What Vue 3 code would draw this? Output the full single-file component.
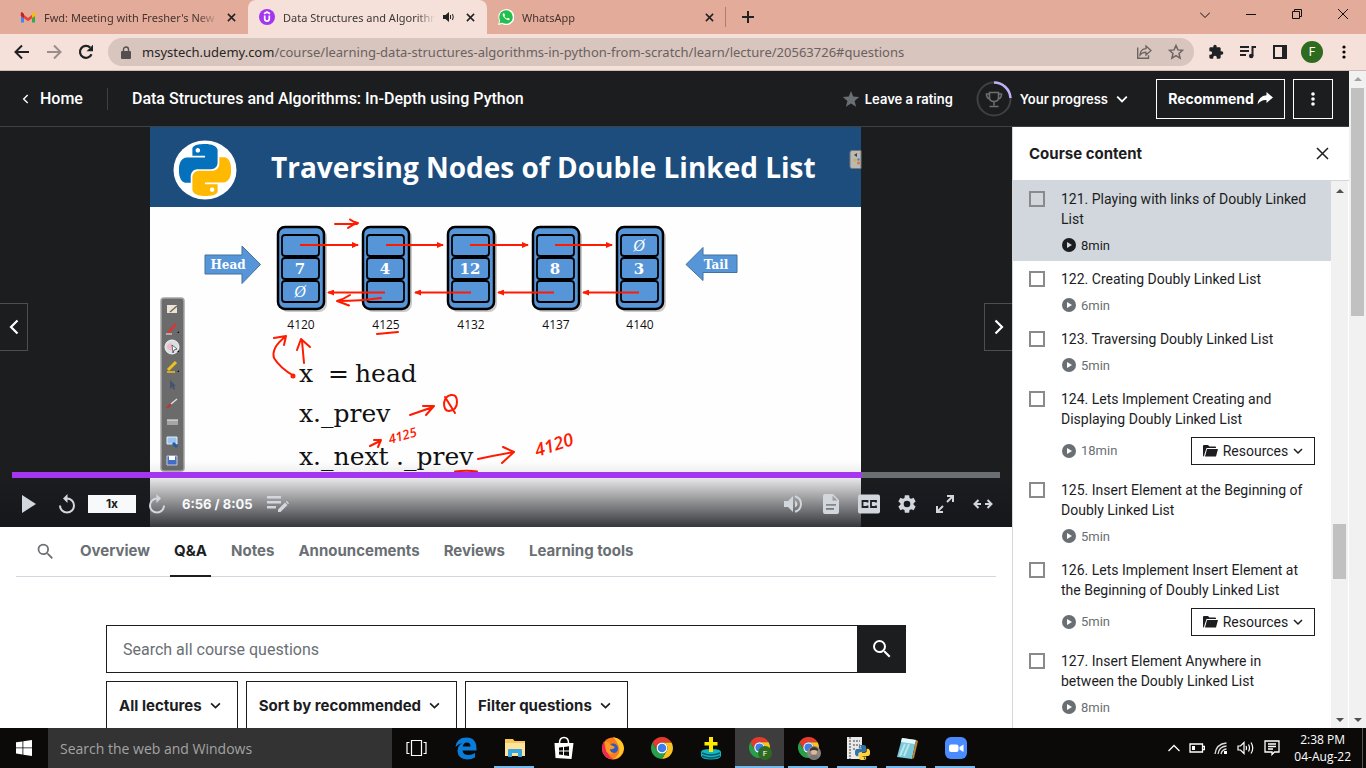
<script setup>
import { ref } from 'vue'

const query = ref('')
const taskQuery = ref('')

const windowButtons = [
  { name: 'Tab search', d: 'M0 3.500l5 5 5-5' },
  { name: 'Minimize', d: 'M0 5.500h10' },
  { name: 'Restore', d: 'M.5 2.500h7v7h-7zM2.500 2.500v-2h7v7h-2' },
  { name: 'Close', d: 'M0 0l10 10M10 0L0 10' }
]

const tabs = ['Overview', 'Q&A', 'Notes', 'Announcements', 'Reviews', 'Learning tools']
const filters = ['All lectures', 'Sort by recommended', 'Filter questions']

const lectures = [
  { id: 121, title: '121. Playing with links of Doubly Linked\nList', time: '8min', current: true },
  { id: 122, title: '122. Creating Doubly Linked List', time: '6min' },
  { id: 123, title: '123. Traversing Doubly Linked List', time: '5min' },
  { id: 124, title: '124. Lets Implement Creating and\nDisplaying Doubly Linked List', time: '18min', resources: true },
  { id: 125, title: '125. Insert Element at the Beginning of\nDoubly Linked List', time: '5min' },
  { id: 126, title: '126. Lets Implement Insert Element at\nthe Beginning of Doubly Linked List', time: '5min', resources: true },
  { id: 127, title: '127. Insert Element Anywhere in\nbetween the Doubly Linked List', time: '8min' }
]

const nodes = [
  { x: 277, top: '', value: '7', bottom: 'Ø', address: '4120' },
  { x: 362, top: '', value: '4', bottom: '', address: '4125' },
  { x: 447, top: '', value: '12', bottom: '', address: '4132' },
  { x: 532, top: '', value: '8', bottom: '', address: '4137' },
  { x: 616, top: 'Ø', value: '3', bottom: '', address: '4140' }
]
const nextLinks = [[300, 358], [386, 443], [470, 528], [555, 612]]
const prevLinks = [[385, 328], [471, 415], [554, 498], [639, 583]]

const apps = [
  { name: 'Task View', icon: 'taskview' },
  { name: 'Edge', icon: 'edge' },
  { name: 'File Explorer', icon: 'folder', open: true },
  { name: 'Store', icon: 'store' },
  { name: 'Firefox', icon: 'firefox' },
  { name: 'Chrome', icon: 'chrome' },
  { name: 'Disk tool', icon: 'disk' },
  { name: 'Chrome F', icon: 'chrome-f', open: true, active: true },
  { name: 'Chrome profile', icon: 'chrome-p', open: true },
  { name: 'Python', icon: 'pyfile', open: true },
  { name: 'Notepad', icon: 'notepad', open: true },
  { name: 'Zoom', icon: 'zoom', open: true }
]
</script>

<template>
  <svg class="defs" width="0" height="0" aria-hidden="true">
    <symbol id="i-x" viewBox="0 0 10 10"><path d="M1 1l8 8M9 1L1 9" stroke="currentColor" stroke-width="1.700" fill="none" /></symbol>
    <symbol id="i-x-thin" viewBox="0 0 13 13"><path d="M1 1l11 11M12 1L1 12" stroke="currentColor" stroke-width="1.500" fill="none" /></symbol>
    <symbol id="i-down" viewBox="0 0 10 10"><path d="M1 3l4 4 4-4" stroke="currentColor" stroke-width="1.500" fill="none" /></symbol>
    <symbol id="i-left" viewBox="0 0 10 16"><path d="M8.500 1.500L2 8l6.500 6.500" stroke="currentColor" stroke-width="2.200" fill="none" /></symbol>
    <symbol id="i-search" viewBox="0 0 24 24"><path d="M15.500 14h-.79l-.28-.27A6.470 6.470 0 0 0 16 9.500 6.500 6.500 0 1 0 9.500 16c1.610 0 3.090-.59 4.230-1.570l.27.28v.79l5 4.990L20.490 19l-4.990-5zm-6 0a4.500 4.500 0 1 1 0-9 4.500 4.500 0 0 1 0 9z" fill="currentColor" /></symbol>
    <symbol id="i-python-half" viewBox="0 0 24 24"><path fill="currentColor" d="M14.250.18l.9.2.73.26.59.3.45.32.34.34.25.34.16.33.1.3.04.26.02.2-.01.13V8.500l-.05.63-.13.55-.21.46-.26.38-.3.31-.33.25-.35.19-.35.14-.33.1-.3.07-.26.04-.21.02H8.770l-.69.05-.59.14-.5.22-.41.27-.33.32-.27.35-.2.36-.15.37-.1.35-.07.32-.04.27-.02.21v3.060H3.170l-.21-.03-.28-.07-.32-.12-.35-.18-.36-.26-.36-.36-.35-.46-.32-.59-.28-.73-.21-.88-.14-1.050-.05-1.230.06-1.220.16-1.040.24-.87.32-.71.36-.57.4-.44.42-.33.42-.24.4-.16.36-.1.32-.05.24-.01h.16l.06.01h8.160v-.83H6.180l-.01-2.750-.02-.37.05-.34.11-.31.17-.28.25-.26.31-.23.38-.2.44-.18.51-.15.58-.12.64-.1.71-.06.77-.04.84-.02 1.270.05zm-6.300 1.980l-.23.33-.08.41.08.41.23.34.33.22.41.09.41-.09.33-.22.23-.34.08-.41-.08-.41-.23-.33-.33-.22-.41-.09-.41.09z" /></symbol>
    <symbol id="i-chrome" viewBox="0 0 48 48">
      <path d="M4.950 13A22 22 0 0 1 43.050 13H24A11 11 0 0 0 14.470 29.500Z" fill="#e33b2e" />
      <path d="M4.950 13A22 22 0 0 1 43.050 13H24A11 11 0 0 0 14.470 29.500Z" fill="#fcc31e" transform="rotate(120 24 24)" />
      <path d="M4.950 13A22 22 0 0 1 43.050 13H24A11 11 0 0 0 14.470 29.500Z" fill="#27a148" transform="rotate(240 24 24)" />
      <circle cx="24" cy="24" r="11" fill="#fff" /><circle cx="24" cy="24" r="8.500" fill="#3f7de8" />
    </symbol>
  </svg>

  <div class="screen">
    <header class="tabstrip">
      <div class="tab">
        <svg width="16" height="16" viewBox="0 0 16 16">
          <path d="M1 4v9.500h3V6z" fill="#4285f4" /><path d="M15 4v9.500h-3V6z" fill="#34a853" />
          <path d="M1 3.500L8 9l7-5.500V7l-7 5.200L1 7z" fill="#ea4335" />
          <path d="M12 5l2-2q1.200 0 1.200 1.500V7L12 9z" fill="#fbbc04" /><path d="M4 5L2 3Q.8 3 .8 4.500V7L4 9z" fill="#c5221f" />
        </svg>
        <span class="tab-title">Fwd: Meeting with Fresher's New</span>
        <button class="tab-close" aria-label="Close tab"><svg width="9" height="9"><use href="#i-x" /></svg></button>
      </div>
      <div class="tab current">
        <svg width="16" height="16" viewBox="0 0 16 16">
          <circle cx="8" cy="8" r="8" fill="#a435f0" />
          <path d="M5 4.800L8 3l3 1.800M5.700 6.500v3.300q0 2.300 2.300 2.300t2.300-2.300V6.500" fill="none" stroke="#fff" stroke-width="1.700" />
        </svg>
        <span class="tab-title">Data Structures and Algorithm</span>
        <svg class="speaker" width="12" height="10" viewBox="0 0 12 10"><path d="M0 3h2.500L6 0v10L2.500 7H0z" fill="#222" /><path d="M7.500 3v4M9.500 2q1.500 3 0 6" stroke="#222" fill="none" /></svg>
        <button class="tab-close" aria-label="Close tab"><svg width="9" height="9"><use href="#i-x" /></svg></button>
      </div>
      <div class="tab">
        <svg width="16" height="16" viewBox="0 0 16 16">
          <path d="M0 16l1.200-4.300A8 8 0 1 1 4.300 15z" fill="#fff" /><circle cx="8" cy="8" r="6.800" fill="#1fc04b" /><path d="M1.400 14.600l1-3.600 2.600 2.600z" fill="#1fc04b" />
          <path d="M5.300 4.300q-1.500 1.500.5 4t4.300 3q1.500 0 1.700-1.600L10 8.800l-.9 1Q7.200 9 6.400 7.200l.7-.9-.8-1.900z" fill="#fff" />
        </svg>
        <span class="tab-title">WhatsApp</span>
        <button class="tab-close" aria-label="Close tab"><svg width="9" height="9"><use href="#i-x" /></svg></button>
      </div>
      <button class="new-tab" aria-label="New tab"><svg width="12" height="12" viewBox="0 0 12 12"><path d="M6 0v12M0 6h12" stroke="#222" stroke-width="2" /></svg></button>
      <div class="window-buttons">
        <button v-for="b in windowButtons" :key="b.name" :aria-label="b.name">
          <svg width="10" height="10" viewBox="0 0 10 10"><path :d="b.d" fill="none" stroke="#111" /></svg>
        </button>
      </div>
    </header>

    <nav class="toolbar">
      <div class="nav-buttons">
        <button aria-label="Back"><svg width="16" height="16" viewBox="0 0 16 16"><path d="M15 8H2M8 1.500L1.500 8 8 14.500" fill="none" stroke="#202124" stroke-width="2" /></svg></button>
        <button aria-label="Forward"><svg width="16" height="16" viewBox="0 0 16 16"><path d="M1 8h13M8 1.500L14.500 8 8 14.500" fill="none" stroke="#9b8d89" stroke-width="2" /></svg></button>
        <button aria-label="Reload"><svg width="16" height="16" viewBox="0 0 16 16"><path d="M13.500 10.200A6 6 0 1 1 12.200 3.600" fill="none" stroke="#202124" stroke-width="2.200" /><path d="M15 .8v6.400H8.600z" fill="#202124" /></svg></button>
      </div>
      <div class="omnibox">
        <svg width="10" height="13" viewBox="0 0 10 13"><path d="M1 5h8q1 0 1 1v6q0 1-1 1H1q-1 0-1-1V6q0-1 1-1z" fill="#54504f" /><path d="M2.500 5V3.500a2.500 2.500 0 0 1 5 0V5" fill="none" stroke="#54504f" stroke-width="1.400" /></svg>
        <span class="url"><b>msystech.udemy.com</b>/course/learning-data-structures-algorithms-in-python-from-scratch/learn/lecture/20563726#questions</span>
        <button aria-label="Share"><svg width="16" height="16" viewBox="0 0 16 16"><path d="M1.700 3.500v10.800h10.800v-3" fill="none" stroke="#6b6462" stroke-width="1.400" /><path d="M4 11q.5-6 6-6.300V2l5 4.500-5 4.500V8.300Q6.500 8 4 11z" fill="none" stroke="#6b6462" stroke-width="1.300" /></svg></button>
        <button aria-label="Bookmark"><svg width="16" height="16" viewBox="0 0 16 16"><path d="M8 1.500l1.900 4.400 4.700.4L11 9.500l1.100 4.700L8 11.700l-4.100 2.500L5 9.500 1.400 6.300l4.700-.4z" fill="none" stroke="#6b6462" stroke-width="1.500" /></svg></button>
      </div>
      <div class="nav-buttons">
        <button aria-label="Extensions"><svg width="16" height="16" viewBox="0 0 24 24"><path d="M20.500 11H19V7c0-1.100-.9-2-2-2h-4V3.500a2.500 2.500 0 0 0-5 0V5H4c-1.100 0-2 .9-2 2v3.800h1.500a2.700 2.700 0 0 1 0 5.400H2V20c0 1.100.9 2 2 2h3.800v-1.500a2.700 2.700 0 0 1 5.400 0V22H17c1.100 0 2-.9 2-2v-4h1.500a2.500 2.500 0 0 0 0-5z" fill="#202124" /></svg></button>
        <button aria-label="Media"><svg width="16" height="14" viewBox="0 0 16 14"><path d="M0 2h9M0 6h9M0 10h6" stroke="#202124" stroke-width="2" /><path d="M12.500 11V2H16" fill="none" stroke="#202124" stroke-width="2" /><circle cx="11.200" cy="11" r="2.300" fill="#202124" /></svg></button>
        <button aria-label="Side panel"><svg width="14" height="14" viewBox="0 0 14 14"><path d="M1 1h12v12H1z" fill="none" stroke="#202124" stroke-width="2" /><path d="M9 1h4v12H9z" fill="#202124" /></svg></button>
        <button aria-label="Profile"><span class="avatar">F</span></button>
        <button aria-label="Menu"><svg width="4" height="14" viewBox="0 0 4 14"><circle cx="2" cy="2" r="1.600" /><circle cx="2" cy="7" r="1.600" /><circle cx="2" cy="12" r="1.600" /></svg></button>
      </div>
    </nav>

    <div class="viewport">
      <div class="page">
        <header class="course-head">
          <a class="home" href="#home"><svg width="7" height="10"><use href="#i-left" /></svg>Home</a>
          <h1>Data Structures and Algorithms: In-Depth using Python</h1>
          <button class="rate"><svg width="18" height="18" viewBox="0 0 18 18"><path d="M9 1l2.200 5.600 6 .4-4.600 3.900 1.500 5.900L9 13.500l-5.100 3.300 1.500-5.900L.8 7l6-.4z" fill="#6a6f73" /></svg>Leave a rating</button>
          <button class="progress">
            <svg width="36" height="36" viewBox="0 0 36 36" fill="none">
              <circle cx="18" cy="18" r="16.500" stroke="#3e4143" stroke-width="2" />
              <path d="M18 1.500A16.500 16.500 0 0 1 34.500 17" stroke="#c0b0f8" stroke-width="2.500" />
              <path d="M13.500 11.500h9v5q0 4-4.500 4t-4.500-4zM13.500 13h-3q0 4.500 3.500 5M22.500 13h3q0 4.500-3.500 5M18 20.500v4M13.500 25.500h9" stroke="#6a6f73" stroke-width="1.600" />
            </svg>
            Your progress
            <svg class="caret" width="12" height="12"><use href="#i-down" /></svg>
          </button>
          <button class="outlined recommend">Recommend<svg width="16" height="14" viewBox="0 0 16 14"><path d="M9.500 0L16 5.500 9.500 11V8Q4 7.500.5 12.500 1.500 4 9.500 3.300z" fill="#fff" /></svg></button>
          <button class="outlined more" aria-label="More options"><svg width="4" height="14" viewBox="0 0 4 14" fill="#fff"><circle cx="2" cy="2" r="1.800" /><circle cx="2" cy="7" r="1.800" /><circle cx="2" cy="12" r="1.800" /></svg></button>
        </header>

        <div class="columns">
          <main class="main">
            <section class="stage">
              <svg class="slide" width="712" height="400" viewBox="150 127 712 400">
                <defs>
                  <marker id="tip" markerWidth="7" markerHeight="6" refX="6" refY="3" orient="auto" markerUnits="userSpaceOnUse"><path d="M0 0l7 3-7 3z" fill="#ff1a00" /></marker>
                </defs>
                <path d="M150 127h711v400H150z" fill="#fffeff" />
                <path d="M150 127h711v80H150z" fill="#1c4d7d" />
                <ellipse cx="205" cy="170" rx="31.500" ry="29.500" fill="#fff" />
                <use href="#i-python-half" x="179" y="144" width="52" height="52" color="#0571bd" />
                <use href="#i-python-half" x="179" y="144" width="52" height="52" color="#ffb900" transform="rotate(180 205 170)" />
                <text class="slide-title" x="271" y="178">Traversing Nodes of Double Linked List</text>
                <path d="M861 150.500h-9q-2 0-2 2v14q0 2 2 2h9z" fill="#b9b9b6" stroke="#777" />
                <path d="M854 155l3-2v4z" fill="#444" /><circle cx="855" cy="160" r="1.500" fill="#e5a92b" /><circle cx="858.500" cy="163" r="1.500" fill="#e5732b" /><circle cx="858.500" cy="159.500" r="1.200" fill="#3f8ac5" />

                <path d="M205 255h37v-9l18.500 18.500-18.500 19v-9.500h-37z" fill="#5696d8" stroke="#41719c" />
                <text class="slab" x="228" y="269">Head</text>
                <path d="M737 255h-34v-7.500l-17 17 17 16v-8h34z" fill="#5696d8" stroke="#41719c" />
                <text class="slab" x="716" y="269">Tail</text>

                <g v-for="n in nodes" :key="n.address">
                  <rect :x="n.x + 3" y="229" width="47" height="83" rx="8" fill="#000" opacity=".2" />
                  <rect :x="n.x + 1" y="227" width="46" height="82" rx="7" fill="#5696d8" stroke="#000" stroke-width="2.500" />
                  <g fill="none" stroke="#000" stroke-width="1.800">
                    <rect :x="n.x + 5" y="235" width="37" height="21" rx="3" />
                    <rect :x="n.x + 5" y="258" width="37" height="21" rx="3" />
                    <rect :x="n.x + 5" y="281" width="37" height="21" rx="3" />
                  </g>
                  <text class="empty" :x="n.x + 23" y="251">{{ n.top }}</text>
                  <text class="value" :x="n.x + 23" y="274">{{ n.value }}</text>
                  <text class="empty" :x="n.x + 23" y="297">{{ n.bottom }}</text>
                  <text class="address" :x="n.x + 24" y="329">{{ n.address }}</text>
                </g>
                <g stroke="#ff1a00" stroke-width="2">
                  <path v-for="l in nextLinks" :key="l[0]" :d="`M${l[0]} 245H${l[1]}`" marker-end="url(#tip)" />
                  <path v-for="l in prevLinks" :key="l[0]" :d="`M${l[0]} 292.500H${l[1]}`" marker-end="url(#tip)" />
                </g>

                <g class="code">
                  <text x="299" y="382">x</text><text x="328" y="382">=</text><text x="355" y="382">head</text>
                  <text x="299" y="422">x._prev</text>
                  <text x="299" y="465">x._next</text><text x="396" y="465">.</text><text x="404" y="465">_prev</text>
                </g>

                <g class="ink">
                  <path d="M335 224h22M350 219.500q3 2.500 8 3.500-5 1-10 5" />
                  <path d="M381 298q-20 3-43 3M350 295q-6 4-13 6l12 4.500" />
                  <path d="M377 334l21-2" />
                  <path d="M294 376q-14-8-20-18-3-10 11-21M274 338l12-2-2 9" /><circle cx="293" cy="376" r="1.500" />
                  <path d="M304 363l-2-22M297 350l4-11 9 8" />
                  <path d="M410 415l23-8M423 406l11 0-8 9" />
                  <path d="M451 395q-6 1-7 8 0 8 5 8 8-1 8-9t-6-7zM445 397l10 16" />
                  <path d="M370 446l10-5M374 440l7 0-3 7" />
                  <path d="M478 459q18-4 36-7M503 447l11 5-12 11" />
                  <path d="M455 471.500q12-1.500 22 0" />
                </g>
                <text class="scribble small" x="390" y="444" transform="rotate(-16 390 444)">4125</text>
                <text class="scribble" x="537" y="457" transform="rotate(-18 537 457)">4120</text>

                <rect x="161" y="298" width="23" height="173" rx="3" fill="#6b6b6b" stroke="#a5a5a5" stroke-width="1.500" />
                <path d="M167 305h10v8h-10z" fill="#e8e4dc" /><path d="M170 312l7-6" stroke="#7d6544" stroke-width="1.500" />
                <path d="M168 333l8-9" stroke="#d33" stroke-width="2.500" /><path d="M166 334h6" stroke="#eee" />
                <circle cx="172" cy="347" r="7" fill="#d9dfe6" stroke="#f5f5f5" /><path d="M167 346q2-4 5-2v6q-5 1-5-4z" fill="#f0b9c6" /><path d="M172 345l5 4-3 1-1 3z" fill="#fff" stroke="#333" stroke-width=".7" />
                <path d="M168 370l8-8" stroke="#ecc31c" stroke-width="3" /><path d="M167 372h8" stroke="#ecc31c" stroke-width="1.500" />
                <path d="M170 380v9l2-2 2 3 1-1-1-3h2z" fill="#46536f" />
                <path d="M167 408l4-4" stroke="#b33" stroke-width="2" /><path d="M171 404l6-5" stroke="#ddd" stroke-width="1.500" />
                <path d="M167 420h11v5h-11z" fill="#a5a5a5" /><path d="M167 420h11" stroke="#eee" />
                <path d="M167 437h10v7h-10z" fill="#9ac4ef" stroke="#e0eefb" /><path d="M173 443l4 4" stroke="#245ba3" stroke-width="3" />
                <path d="M167 456h10v9h-10z" fill="#3f6fc7" stroke="#ccd" /><path d="M169 456h6v4h-6z" fill="#fff" />
                <path d="M177 333h2v-2zM177 352h2v-2zM177 372h2v-2z" fill="#111" />
              </svg>

              <button class="step prev" aria-label="Previous lecture"><svg width="10" height="16"><use href="#i-left" /></svg></button>
              <button class="step next" aria-label="Next lecture"><svg class="flip" width="10" height="16"><use href="#i-left" /></svg></button>

              <div class="player">
                <div class="track"><div class="played"></div></div>
                <div class="controls">
                  <button aria-label="Play"><svg width="14" height="18" viewBox="0 0 14 18"><path d="M0 0l14 9-14 9z" /></svg></button>
                  <button aria-label="Rewind"><svg width="18" height="20" viewBox="0 0 18 20"><path d="M2 11.500a7 7 0 1 0 7-7" fill="none" stroke="currentColor" stroke-width="2" /><path d="M9.500 0v9L5 4.500z" /></svg></button>
                  <button class="speed">1x</button>
                  <button aria-label="Forward"><svg width="18" height="20" viewBox="0 0 18 20"><path d="M16 11.500a7 7 0 1 1-7-7" fill="none" stroke="currentColor" stroke-width="2" /><path d="M8.500 0v9L13 4.500z" /></svg></button>
                  <span class="time">6:56 / 8:05</span>
                  <button aria-label="Add note"><svg width="22" height="18" viewBox="0 0 22 18"><path d="M0 1h14v2.500H0zM0 6h14v2.500H0zM0 11h9v2.500H0zM11 14.500l7-7 2.500 2.500-7 7H11zM18.800 6.700l1-1 2.200 2.500-1 1z" /></svg></button>
                  <span class="spacer"></span>
                  <button aria-label="Volume"><svg width="18" height="18" viewBox="0 0 18 18"><path d="M0 6h4l5-5v16l-5-5H0zM11 5.500q2.500 1 2.500 3.500T11 12.500z" /><path d="M11 1.200q6 2 6 7.800t-6 7.800" fill="none" stroke="currentColor" stroke-width="2" /></svg></button>
                  <button aria-label="Transcript"><svg width="16" height="20" viewBox="0 0 16 20"><path fill-rule="evenodd" d="M2 0h8l6 6v12q0 2-2 2H2q-2 0-2-2V2q0-2 2-2zM9.500 1.500V6.500h5zM3 10v1.700h10V10zM3 14v1.700h8V14z" /></svg></button>
                  <button aria-label="Captions"><svg width="22" height="20" viewBox="0 0 22 20"><rect width="22" height="19" y=".5" rx="2" /><path d="M9.500 8.500V7H4.500v6h5v-1.500M18 8.500V7h-5v6h5v-1.500" fill="none" stroke="#202124" stroke-width="1.800" /></svg></button>
                  <button aria-label="Settings"><svg width="22" height="22" viewBox="0 0 24 24"><path d="M19.140 12.940c.04-.3.06-.61.06-.94s-.02-.64-.07-.94l2.030-1.580a.49.49 0 0 0 .12-.61l-1.920-3.320a.49.49 0 0 0-.59-.22l-2.390.96c-.5-.38-1.030-.7-1.620-.94l-.36-2.540a.48.48 0 0 0-.48-.41h-3.840c-.24 0-.43.17-.47.41l-.36 2.540c-.59.24-1.130.57-1.620.94l-2.390-.96a.49.49 0 0 0-.59.22L2.740 8.870c-.12.21-.08.47.12.61l2.030 1.580c-.05.3-.09.63-.09.94s.02.64.07.94l-2.030 1.580a.49.49 0 0 0-.12.61l1.920 3.320c.12.22.37.29.59.22l2.390-.96c.5.38 1.030.7 1.620.94l.36 2.540c.05.24.24.41.48.41h3.840c.24 0 .44-.17.47-.41l.36-2.540c.59-.24 1.130-.56 1.620-.94l2.390.96c.22.08.47 0 .59-.22l1.920-3.320a.49.49 0 0 0-.12-.61zM12 15.600a3.600 3.600 0 1 1 0-7.200 3.600 3.600 0 0 1 0 7.200z" /></svg></button>
                  <button aria-label="Fullscreen"><svg width="18" height="18" viewBox="0 0 18 18" fill="none" stroke="currentColor" stroke-width="2"><path d="M11 1h6v6M17 1l-6 6M7 17H1v-6M1 17l6-6" /></svg></button>
                  <button aria-label="Expand"><svg width="20" height="10" viewBox="0 0 20 10" fill="none" stroke="currentColor" stroke-width="2"><path d="M5.500 1l-4 4 4 4M14.500 1l4 4-4 4M2 5h6M12 5h6" /></svg></button>
                </div>
              </div>
            </section>

            <nav class="tabs">
              <button class="tab-search" aria-label="Search course"><svg width="21" height="21"><use href="#i-search" /></svg></button>
              <button v-for="t in tabs" :key="t" :class="{ selected: t === 'Q&A' }">{{ t }}</button>
            </nav>

            <section class="questions">
              <form class="search" @submit.prevent>
                <input v-model="query" type="text" placeholder="Search all course questions" aria-label="Search all course questions">
                <button aria-label="Search"><svg width="24" height="24"><use href="#i-search" /></svg></button>
              </form>
              <div class="filters">
                <button v-for="f in filters" :key="f">{{ f }}<svg width="11" height="11"><use href="#i-down" /></svg></button>
              </div>
            </section>
          </main>

          <aside class="sidebar">
            <header><h2>Course content</h2><button aria-label="Close"><svg width="13" height="13"><use href="#i-x-thin" /></svg></button></header>
            <div class="list-wrap">
              <ul>
                <li v-for="l in lectures" :key="l.id" :class="{ current: l.current }">
                  <input :id="`lecture-${l.id}`" type="checkbox">
                  <div class="lecture">
                    <label :for="`lecture-${l.id}`">{{ l.title }}</label>
                    <div class="meta" :class="{ tall: l.resources }">
                      <svg width="14" height="14" viewBox="0 0 14 14"><circle cx="7" cy="7" r="7" fill="currentColor" /><path d="M5 4l5 3-5 3z" :fill="l.current ? '#d1d7dc' : '#fff'" /></svg>
                      <span>{{ l.time }}</span>
                      <button v-if="l.resources">
                        <svg width="15" height="12" viewBox="0 0 15 12"><path d="M0 1q0-1 1-1h4l1.500 1.500H12q1 0 1 1V3H3.500L1.500 9 1 11.500Q0 11.500 0 10.500zM4 4h11l-2 7.500H2z" fill="#1c1d1f" /></svg>
                        Resources
                        <svg width="10" height="10"><use href="#i-down" /></svg>
                      </button>
                    </div>
                  </div>
                </li>
              </ul>
              <div class="scrollbar inner"><i class="up"></i><i class="thumb"></i><i class="down"></i></div>
            </div>
          </aside>
        </div>
      </div>
      <div class="scrollbar outer"><i class="up"></i><i class="thumb"></i><i class="down"></i></div>
    </div>

    <footer class="taskbar">
      <button class="start" aria-label="Start"><svg width="16" height="16" viewBox="0 0 16 16"><path d="M0 2.300L6.500 1.400v6.100H0zM7.300 1.300L16 0v7.500H7.300zM0 8.300h6.500v6.200L0 13.600zM7.300 8.300H16V16l-8.700-1.300z" fill="#fff" /></svg></button>
      <input v-model="taskQuery" class="task-search" type="text" placeholder="Search the web and Windows" aria-label="Search the web and Windows">
      <button v-for="a in apps" :key="a.name" class="app" :class="{ open: a.open, active: a.active }" :aria-label="a.name">
        <svg width="24" height="24" viewBox="0 0 24 24">
          <g v-if="a.icon === 'taskview'" fill="none" stroke="#fff" stroke-width="1.200"><path d="M6.500 4.500h10v15h-10zM4.500 6.500H2v11h2.500M18.500 6.500H21v11h-2.500" /></g>
          <path v-else-if="a.icon === 'edge'" fill="#0a7ddb" d="M1.500 11Q2.500 1.500 12.500 1.500q10 0 10 11.500v1.500H8.500q.5 4.500 6 4.500 3.500 0 6.500-2v4.500q-3.500 2-8 2-9-.5-9.500-8.500 0-5.500 5-8-4.500 1-7 4zM8.800 10.500h7.700q0-4-3.500-4t-4.200 4z" />
          <g v-else-if="a.icon === 'folder'"><path d="M2 3h8l1.500 2H22v15H2z" fill="#f5c955" /><path d="M2 7h20v13H2z" fill="#fde39b" /><path d="M5 21v-7q0-1 1-1h12q1 0 1 1v7h-4v-4H9v4z" fill="#38a5e0" /></g>
          <g v-else-if="a.icon === 'store'"><path d="M2.500 7h19l-2 16-16-1z" fill="#fff" /><path d="M7.500 7q0-5.500 4.500-5.500T16.500 7" fill="none" stroke="#fff" stroke-width="1.500" /><path d="M7 11.500l4-.5v3.500H7zM12 11l5-.7v4.200h-5zM7 15.500h4V19l-4-.5zM12 15.500h5V20l-5-.8z" fill="#0b0a09" /></g>
          <g v-else-if="a.icon === 'firefox'"><circle cx="12" cy="12.500" r="11" fill="#ff7a1a" /><path d="M12 1q10 2 11 11.500Q21 22 12 23.500q8-5 6-12-1-5-6-10.500z" fill="#ffc928" /><path d="M3 5q1 12 9 18.500Q1 22 1 12q0-4 2-7z" fill="#ee2758" /><circle cx="12" cy="12.500" r="5" fill="#2b5cc4" /><path d="M4 5q4 1 6 4l4 2q-2 3-5 2 0 4 5 4-6 3-9-2z" fill="#ff9a1e" /></g>
          <use v-else-if="a.icon === 'chrome'" href="#i-chrome" width="24" height="24" />
          <g v-else-if="a.icon === 'disk'"><path d="M2 16q0-3 10-3t10 3v4q-1 3.500-10 3.500T2 20z" fill="#12b9c4" /><path d="M3 17q9 4 18 0M3 20q9 4 18 0" fill="none" stroke="#075a68" stroke-width="1.500" /><path d="M10 1h4v5h4.500v3.500H14V16h-4V9.500H5.500V6H10z" fill="#ffe900" /></g>
          <g v-else-if="a.icon === 'chrome-f'"><use href="#i-chrome" width="23" height="23" /><circle cx="17" cy="17" r="7" fill="#2f6b1f" /><text class="badge-text" x="17" y="20">F</text></g>
          <g v-else-if="a.icon === 'chrome-p'"><use href="#i-chrome" width="23" height="23" /><circle cx="17" cy="17" r="7" fill="#8d8580" /><circle cx="17" cy="16" r="3" fill="#dcb79c" /><path d="M13 13q4-4 8 0v2q-4-2-8 0z" fill="#3b3532" /><path d="M12 21q5-5 10 0-5 5-10 0z" fill="#777" /></g>
          <g v-else-if="a.icon === 'pyfile'"><path d="M1 1h15v22H1z" fill="#e9e9e9" /><path d="M4 1v22M7 5h7M7 9h7M7 13h3" stroke="#777" stroke-width="1.500" stroke-dasharray="2 1" /><use href="#i-python-half" x="9" y="9" width="15" height="15" color="#3673a5" /><use href="#i-python-half" x="9" y="9" width="15" height="15" color="#ffd23f" transform="rotate(180 16.500 16.500)" /></g>
          <g v-else-if="a.icon === 'notepad'"><path d="M7 2l14 2-4 19-15-2z" fill="#79c9d8" /><path d="M7 2l14 2-1 4L6 6z" fill="#e8f7fa" /><path d="M10 8l-5 12M14 8L9 20" stroke="#b8e6ee" stroke-width="2" /><path d="M21 4l2 1-4 17-2 1z" fill="#b8863b" /></g>
          <g v-else><rect x="1" y="1" width="22" height="22" rx="6" fill="#4a8cff" /><rect x="5" y="8.500" width="9.500" height="7.500" rx="2" fill="#fff" /><path d="M15.500 11l4-2.500v7.500l-4-2.500z" fill="#fff" /></g>
        </svg>
      </button>
      <div class="tray">
        <svg width="12" height="8" viewBox="0 0 12 8"><path d="M.5 7L6 1.500 11.500 7" fill="none" stroke="#fff" stroke-width="1.300" /></svg>
        <svg width="16" height="10" viewBox="0 0 16 10"><path d="M1 1h12.500v8H1zM14 3.500h1.500v3H14" fill="none" stroke="#fff" stroke-width="1.300" /><path d="M3 3h3v4H3z" fill="#fff" /></svg>
        <svg width="14" height="14" viewBox="0 0 14 14"><path d="M1 13Q2 3 12.500 2M4 13q1-7.500 8.500-8M7 13q1-4.500 5.500-5" fill="none" stroke="#ddd" stroke-width="1.300" /><path d="M10 10h3v3h-3z" fill="#fff" /></svg>
        <svg width="18" height="14" viewBox="0 0 18 14" fill="none" stroke="#fff" stroke-width="1.200"><path d="M1 5h2.500L7 1.500v11L3.500 9H1zM9 5q1 2 0 4M11.500 3.500q2 3.500 0 7M14 1.500q3.500 5.500 0 11" /></svg>
        <svg width="16" height="16" viewBox="0 0 16 16" fill="none" stroke="#fff" stroke-width="1.300"><path d="M1 1h14v11h-4.500L8 14.500V12H1zM4 4h8M4 6.500h8M4 9h5" /></svg>
        <div class="clock"><span>2:38 PM</span><span>04-Aug-22</span></div>
      </div>
    </footer>
  </div>
</template>

<style>
html, body { margin: 0; background: #fff; }
</style>

<style scoped>
* { box-sizing: border-box; }
button { font: inherit; color: inherit; border: 0; padding: 0; margin: 0; background: none; display: flex; align-items: center; justify-content: center; }
input { font: inherit; margin: 0; border-radius: 0; }
svg { flex: none; display: block; }
.defs { position: absolute; }
.screen { height: 100vh; display: flex; flex-direction: column; overflow: hidden; font-family: Roboto, "Liberation Sans", sans-serif; color: #1c1d1f; }

.tabstrip { flex: none; height: 34px; background: #e3ab99; display: flex; padding-left: 9px; font-family: "Noto Sans", "Open Sans", sans-serif; font-size: 11px; color: #45332f; }
.tab { width: 239px; display: flex; align-items: center; padding: 0 12px 0 11px; }
.tab.current { background: #f5e1da; border-radius: 8px 8px 0 0; color: #3b3634; }
.tab-title { flex: 1; min-width: 0; margin: 0 8px; white-space: nowrap; -webkit-mask-image: linear-gradient(90deg, #000 88%, transparent); mask-image: linear-gradient(90deg, #000 88%, transparent); }
.speaker { margin-right: 10px; }
.tab-close { width: 10px; color: #222; }
.new-tab { width: 44px; border-left: 1px solid #a87f73; height: 20px; margin: 7px 0 0 -1px; }
.window-buttons { margin-left: auto; display: flex; height: 28px; }
.window-buttons button { width: 46px; }

.toolbar { flex: none; height: 37px; background: #f5e1da; border-bottom: 1px solid #cfbcb3; display: flex; align-items: center; padding: 0 6px; gap: 6px; }
.nav-buttons { display: flex; }
.nav-buttons button { width: 32px; height: 28px; }
.omnibox { flex: 1; height: 28px; border-radius: 14px; background: #d7c5be; display: flex; align-items: center; padding: 0 2px 0 13px; min-width: 0; }
.omnibox button { width: 32px; }
.url { flex: 1; min-width: 0; margin-left: 11px; white-space: nowrap; overflow: hidden; font-family: "Noto Sans", "Open Sans", sans-serif; font-size: 13px; color: #6b615e; }
.url b { font-weight: 400; color: #2a2625; }
.avatar { width: 22px; height: 22px; border-radius: 50%; background: #2f6b1f; color: #fff; font-size: 12px; line-height: 22px; text-align: center; }

.viewport { flex: 1; min-height: 0; display: flex; }
.page { flex: 1; min-width: 0; display: flex; flex-direction: column; background: #fff; }
.course-head { flex: none; height: 56px; background: #1c1d1f; border-bottom: 1px solid #3e4143; color: #fff; display: flex; align-items: center; padding: 0 16px 0 22px; font-size: 16px; font-weight: 500; }
.home { display: flex; align-items: center; gap: 11px; color: #fff; text-decoration: none; padding-right: 24px; border-right: 1px solid #3e4143; line-height: 22px; }
h1 { flex: 1; margin: 0 0 0 24px; font-size: 16px; font-weight: 500; white-space: nowrap; }
.rate, .progress, .recommend { font-family: Inter, Roboto, sans-serif; font-weight: 600; font-size: 13px; }
.rate { gap: 5px; margin-right: 23px; }
.progress { gap: 8px; margin-right: 28px; }
.outlined { height: 40px; border: 1px solid #fff; }
.recommend { width: 129px; gap: 3px; margin-right: 8px; font-size: 14px; font-weight: 700; }
.more { width: 40px; }

.columns { flex: 1; min-height: 0; display: flex; }
.main { flex: 1; min-width: 0; overflow: hidden; }
.stage { position: relative; height: 400px; background: #1c1d1f; display: flex; justify-content: center; overflow: hidden; }
.slide-title { font: 700 28px "Open Sans", "Noto Sans", sans-serif; fill: #fff; }
.slab { font: 700 12px "DejaVu Serif", serif; fill: #fff; text-anchor: middle; }
.value { font: 700 15px "DejaVu Serif", serif; fill: #fff; text-anchor: middle; }
.empty { font: italic 16px "Liberation Serif", serif; fill: #fff; text-anchor: middle; }
.address { font: 12px "Open Sans", sans-serif; fill: #111; text-anchor: middle; }
.code { font: 25px "DejaVu Serif", serif; fill: #111; }
.ink { fill: none; stroke: #ff1a00; stroke-width: 2; stroke-linecap: round; stroke-linejoin: round; }
.scribble { font: italic 600 18px "Open Sans", sans-serif; fill: #ff1a00; }
.scribble.small { font-size: 13px; }
.step { position: absolute; top: 176px; width: 28px; height: 48px; background: #1c1d1f; border: 1px solid #4b4e52; color: #fff; }
.prev { left: 0; border-left: 0; }
.next { right: 0; border-right: 0; }
.flip { transform: scaleX(-1); }
.player { position: absolute; left: 0; right: 0; bottom: 0; padding-top: 11px; background: linear-gradient(rgba(20, 22, 27, 0), rgba(20, 22, 27, .1) 26%, rgba(20, 22, 27, .86)); }
.track { height: 6px; margin: 0 12px; background: #6a6f73; }
.played { width: 86%; height: 100%; background: #a435f0; }
.controls { height: 49px; padding: 2px 10px 0; display: flex; align-items: center; color: #d1d7dc; }
.controls button { width: 38px; height: 38px; }
.controls svg { fill: currentColor; }
.controls svg[fill="none"] { fill: none; }
.controls .speed { width: 48px; height: 18px; margin: 0 2px; background: #f7f9fa; color: #1c1d1f; font: 700 12px Inter, Roboto, sans-serif; }
.time { margin: 0 6px; color: #f7f9fa; font: 700 13px Inter, Roboto, sans-serif; }
.spacer { flex: 1; }

.tabs { display: flex; height: 50px; margin: 0 16px; padding-left: 19px; border-bottom: 1px solid #d1d7dc; font: 700 15px Inter, Roboto, sans-serif; color: #6a6f73; }
.tabs button { margin: 0 8px; padding: 0 4px 2px; height: 50px; border-bottom: 2px solid transparent; }
.tabs .tab-search { margin: 0 12px 0 0; padding: 0; }
.tabs .selected { color: #1c1d1f; border-color: #1c1d1f; }
.questions { padding: 48px 106px 0; }
.search { display: flex; }
.search input { flex: 1; min-width: 0; height: 48px; border: 1px solid #1c1d1f; padding: 0 16px; font-size: 16px; background: #fff; outline: 0; }
.search input::placeholder { color: #6a6f73; opacity: 1; }
.search button { width: 48px; background: #1c1d1f; color: #fff; }
.filters { display: flex; gap: 8px; margin-top: 8px; }
.filters button { height: 48px; border: 1px solid #1c1d1f; padding: 0 16px 0 12px; gap: 8px; font: 700 15px Inter, Roboto, sans-serif; }

.sidebar { width: 337px; flex: none; border-left: 1px solid #d1d7dc; display: flex; flex-direction: column; }
.sidebar header { flex: none; height: 54px; display: flex; align-items: center; justify-content: space-between; padding: 0 20px 0 16px; border-bottom: 1px solid #d1d7dc; }
h2 { margin: 0; font: 700 15px Inter, Roboto, sans-serif; }
.list-wrap { flex: 1; min-height: 0; display: flex; }
ul { flex: 1; min-width: 0; margin: 0; padding: 0; list-style: none; overflow: hidden; }
li { display: flex; padding: 8px 16px 0; gap: 16px; }
li.current { background: #d1d7dc; }
li input { appearance: none; flex: none; width: 16px; height: 16px; margin-top: 2px; border: 2px solid #8a8a8c; }
.lecture { flex: 1; min-width: 0; }
label { display: block; font-size: 14px; line-height: 20px; white-space: pre-line; }
.meta { height: 32px; display: flex; align-items: center; gap: 5px; padding-left: 1px; font-size: 13px; color: #6a6f73; }
.meta.tall { height: 43px; }
.current .meta { color: #1c1d1f; }
.meta button { margin-left: auto; width: 124px; height: 28px; border: 1px solid #1c1d1f; color: #1c1d1f; font-size: 14px; gap: 5px; }

.scrollbar { flex: none; width: 17px; background: #f1f1f1; display: flex; flex-direction: column; align-items: center; padding: 6px 0; }
.scrollbar.inner { width: 18px; border-right: 1px solid #fff; }
.up { border: 4px solid transparent; border-top: 0; border-bottom: 4px solid #505050; }
.down { border: 4px solid transparent; border-bottom: 0; border-top: 4px solid #505050; margin-top: auto; }
.thumb { width: 13px; background: #c1c1c1; }
.inner .up { margin-top: 2px; }
.inner .thumb { height: 55px; margin-top: 331px; }
.outer .up { border-bottom-color: #a3a3a3; }
.outer .thumb { height: 228px; margin-top: 7px; }

.taskbar { flex: none; height: 40px; background: #0b0a09; display: flex; color: #fff; font-family: "Open Sans", "Noto Sans", sans-serif; }
.start { width: 48px; }
.task-search { width: 344px; border: 0; background: #333; padding: 0 12px; font-size: 14px; color: #fff; outline: 0; }
.task-search::placeholder { color: #a3a3a3; opacity: 1; }
.app { width: 49px; position: relative; }
.app.active { background: #3d3d3d; }
.app.open::after { content: ""; position: absolute; left: 4px; right: 5px; bottom: 0; height: 2px; background: #76b9ed; }
.app.active::after { left: 0; right: 0; }
.badge-text { font: 8px Roboto, sans-serif; fill: #fff; text-anchor: middle; }
.tray { margin-left: auto; display: flex; align-items: center; gap: 9px; padding-right: 11px; border-right: 1px solid #555; margin-right: 3px; }
.clock { margin-left: 5px; display: flex; flex-direction: column; align-items: center; font-size: 12px; line-height: 17px; }
</style>
